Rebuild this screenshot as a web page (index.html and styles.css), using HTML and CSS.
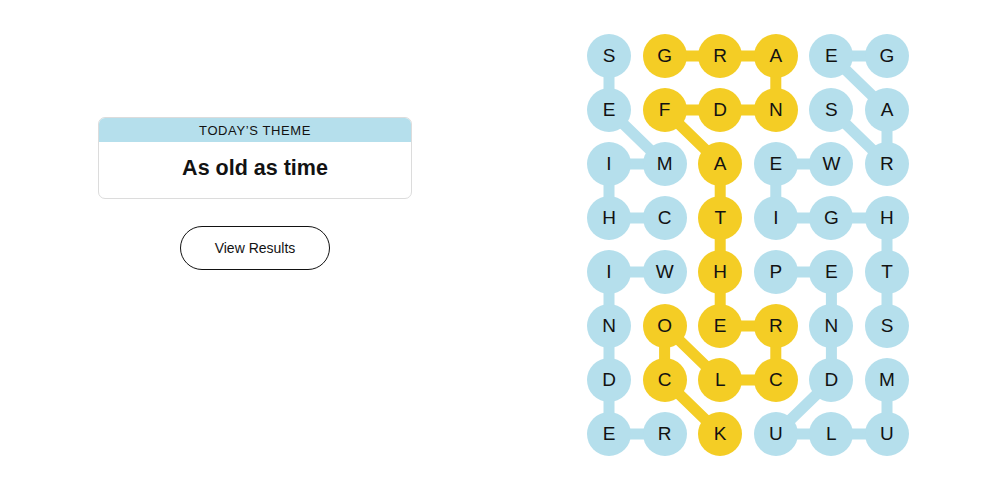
FILE: index.html
```html
<!DOCTYPE html>
<html lang="en">
<head>
    <meta charset="UTF-8">
    <meta name="viewport" content="width=device-width, initial-scale=1.0">
    <title>Strands</title>
    <link rel="stylesheet" href="styles.css">
</head>
<body>
    <div class="page">
        <div class="side">
            <div class="theme-card">
                <div class="theme-label">TODAY’S THEME</div>
                <h1 class="theme-title">As old as time</h1>
            </div>
            <button class="results-btn">View Results</button>
        </div>

        <div class="board">
            <svg class="links" width="322" height="422" viewBox="0 0 322 422">
                <g fill="none" stroke-width="11" stroke-linejoin="round" stroke-linecap="round">
                    <!-- spangram -->
                    <polyline class="gold" points="77.6,22 133.2,22 188.8,22 188.8,76 133.2,76 77.6,76 133.2,130 133.2,184 133.2,238 133.2,292 188.8,292 188.8,346 133.2,346 77.6,292 77.6,346 133.2,400"/>
                    <!-- theme words -->
                    <polyline class="blue" points="77.6,184 22,184 22,130 77.6,130 22,76 22,22"/>
                    <polyline class="blue" points="77.6,238 22,238 22,292 22,346 22,400 77.6,400"/>
                    <polyline class="blue" points="300,22 244.4,22 300,76 300,130 244.4,76"/>
                    <polyline class="blue" points="244.4,130 188.8,130 188.8,184 244.4,184 300,184 300,238 300,292"/>
                    <polyline class="blue" points="188.8,238 244.4,238 244.4,292 244.4,346 188.8,400 244.4,400 300,400 300,346"/>
                </g>
            </svg>

            <div class="grid">
                <span class="cell blue">S</span><span class="cell gold">G</span><span class="cell gold">R</span><span class="cell gold">A</span><span class="cell blue">E</span><span class="cell blue">G</span>
                <span class="cell blue">E</span><span class="cell gold">F</span><span class="cell gold">D</span><span class="cell gold">N</span><span class="cell blue">S</span><span class="cell blue">A</span>
                <span class="cell blue">I</span><span class="cell blue">M</span><span class="cell gold">A</span><span class="cell blue">E</span><span class="cell blue">W</span><span class="cell blue">R</span>
                <span class="cell blue">H</span><span class="cell blue">C</span><span class="cell gold">T</span><span class="cell blue">I</span><span class="cell blue">G</span><span class="cell blue">H</span>
                <span class="cell blue">I</span><span class="cell blue">W</span><span class="cell gold">H</span><span class="cell blue">P</span><span class="cell blue">E</span><span class="cell blue">T</span>
                <span class="cell blue">N</span><span class="cell gold">O</span><span class="cell gold">E</span><span class="cell gold">R</span><span class="cell blue">N</span><span class="cell blue">S</span>
                <span class="cell blue">D</span><span class="cell gold">C</span><span class="cell gold">L</span><span class="cell gold">C</span><span class="cell blue">D</span><span class="cell blue">M</span>
                <span class="cell blue">E</span><span class="cell blue">R</span><span class="cell gold">K</span><span class="cell blue">U</span><span class="cell blue">L</span><span class="cell blue">U</span>
            </div>
        </div>
    </div>
</body>
</html>
```

FILE: styles.css
```css
body {
    font-family: 'Liberation Sans', Arial, sans-serif;
    margin: 0;
    padding: 0;
    background: #ffffff;
    color: #121212;
}
.page {
    display: flex;
    align-items: flex-start;
    padding: 34px 0 0 98px;
}
.side {
    width: 314px;
    display: flex;
    flex-direction: column;
    align-items: center;
    padding-top: 83px;
}
.theme-card {
    width: 100%;
    box-sizing: border-box;
    border: 1px solid #dcdcdc;
    border-radius: 7px;
    overflow: hidden;
    text-align: center;
}
.theme-label {
    background: #b5dfec;
    height: 24px;
    line-height: 25px;
    font-size: 13px;
    letter-spacing: 0.6px;
}
.theme-title {
    margin: 0;
    padding-bottom: 3px;
    font-size: 21.5px;
    font-weight: bold;
    line-height: 53px;
}
.results-btn {
    margin-top: 27px;
    width: 150px;
    height: 44px;
    border: 1px solid #121212;
    border-radius: 22px;
    background: #fff;
    font-family: 'Liberation Sans', Arial, sans-serif;
    font-size: 14px;
    color: #121212;
    cursor: pointer;
}
.board {
    position: relative;
    margin-left: 175px;
    width: 322px;
    height: 422px;
}
.links {
    position: absolute;
    top: 0;
    left: 0;
}
.links .gold {
    stroke: #f4cd25;
}
.links .blue {
    stroke: #b5dfec;
}
.grid {
    position: relative;
    display: grid;
    grid-template-columns: repeat(6, 44px);
    grid-auto-rows: 44px;
    column-gap: 11.6px;
    row-gap: 10px;
}
.cell {
    display: flex;
    align-items: center;
    justify-content: center;
    border-radius: 50%;
    font-size: 19px;
}
.cell.blue {
    background: #b5dfec;
}
.cell.gold {
    background: #f4cd25;
}
```
